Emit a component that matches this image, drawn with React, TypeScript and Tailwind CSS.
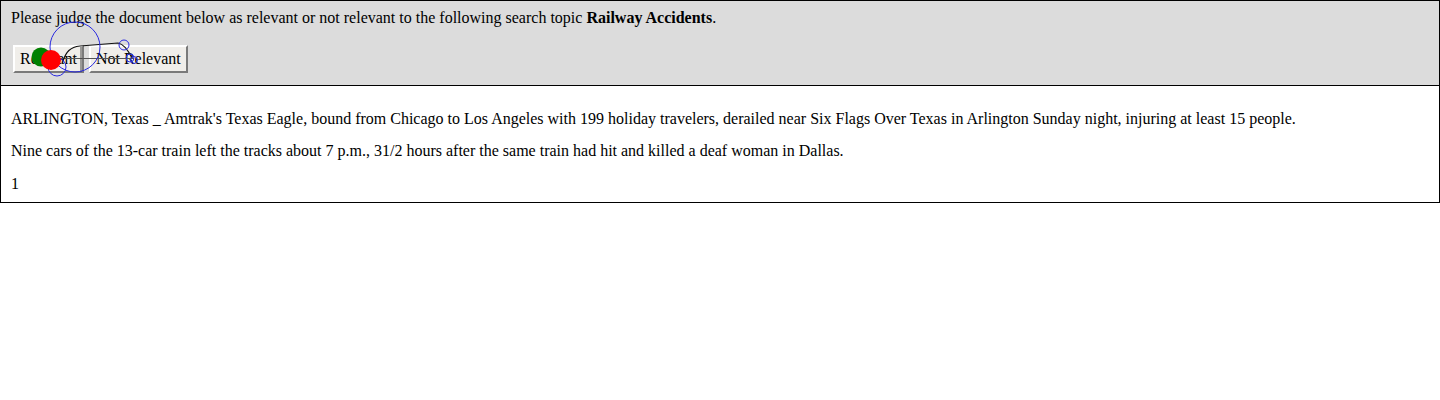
import React from "react";

export default function App() {
  return (
    <div className="relative w-[1440px] text-[16px] leading-[18px] text-black" style={{ fontFamily: '"Liberation Serif", "Times New Roman", serif' }}>
      <div className="border border-black bg-[#dcdcdc] px-[10px] pt-[8px] pb-[12px]">
        <div>
          Please judge the document below as relevant or not relevant to the following search topic <b>Railway Accidents</b>.
        </div>
        <div className="mt-[18px] flex items-center gap-[5px] pl-[2px]">
          <button className="bg-[#f0eeea] border-2 border-t-white border-l-white border-b-[#7a7a7a] border-r-[#7a7a7a] px-[5px] py-[3px] leading-[18px]">
            Relevant
          </button>
          <button className="bg-[#f0eeea] border-2 border-t-white border-l-white border-b-[#7a7a7a] border-r-[#7a7a7a] px-[5px] py-[3px] leading-[18px]">
            Not Relevant
          </button>
        </div>
      </div>
      <div className="border border-t-0 border-black px-[10px] pt-[24px] pb-[9px]">
        <p>
          ARLINGTON, Texas _ Amtrak's Texas Eagle, bound from Chicago to Los Angeles with 199 holiday travelers, derailed near Six Flags Over Texas in Arlington Sunday night, injuring at least 15 people.
        </p>
        <p className="mt-[14px]">
          Nine cars of the 13-car train left the tracks about 7 p.m., 31/2 hours after the same train had hit and killed a deaf woman in Dallas.
        </p>
        <div className="mt-[15px]">1</div>
      </div>
      <svg className="pointer-events-none absolute left-0 top-0" width="200" height="100" viewBox="0 0 200 100">
        <line x1="56" y1="58.5" x2="134" y2="58.5" stroke="#555" strokeWidth="1.2" />
        <path d="M 63 61 C 66 52, 70 47, 80 46 L 118 43 C 124 44, 128 50, 132 58" fill="none" stroke="#111" strokeWidth="1.2" />
        <line x1="81" y1="47" x2="81" y2="72" stroke="#444" strokeWidth="1" />
        <circle cx="75" cy="47" r="25" fill="none" stroke="#2a2ae0" strokeWidth="1" />
        <circle cx="57" cy="67" r="9" fill="none" stroke="#2a2ae0" strokeWidth="1" />
        <circle cx="124" cy="45" r="5" fill="none" stroke="#2a2ae0" strokeWidth="1" />
        <circle cx="130" cy="58" r="4" fill="none" stroke="#2a2ae0" strokeWidth="1" />
        <circle cx="134" cy="60" r="3.5" fill="none" stroke="#2a2ae0" strokeWidth="1" />
        <circle cx="41" cy="57" r="9.5" fill="#008000" />
        <circle cx="51" cy="60" r="10" fill="#ff0000" />
      </svg>
    </div>
  );
}
